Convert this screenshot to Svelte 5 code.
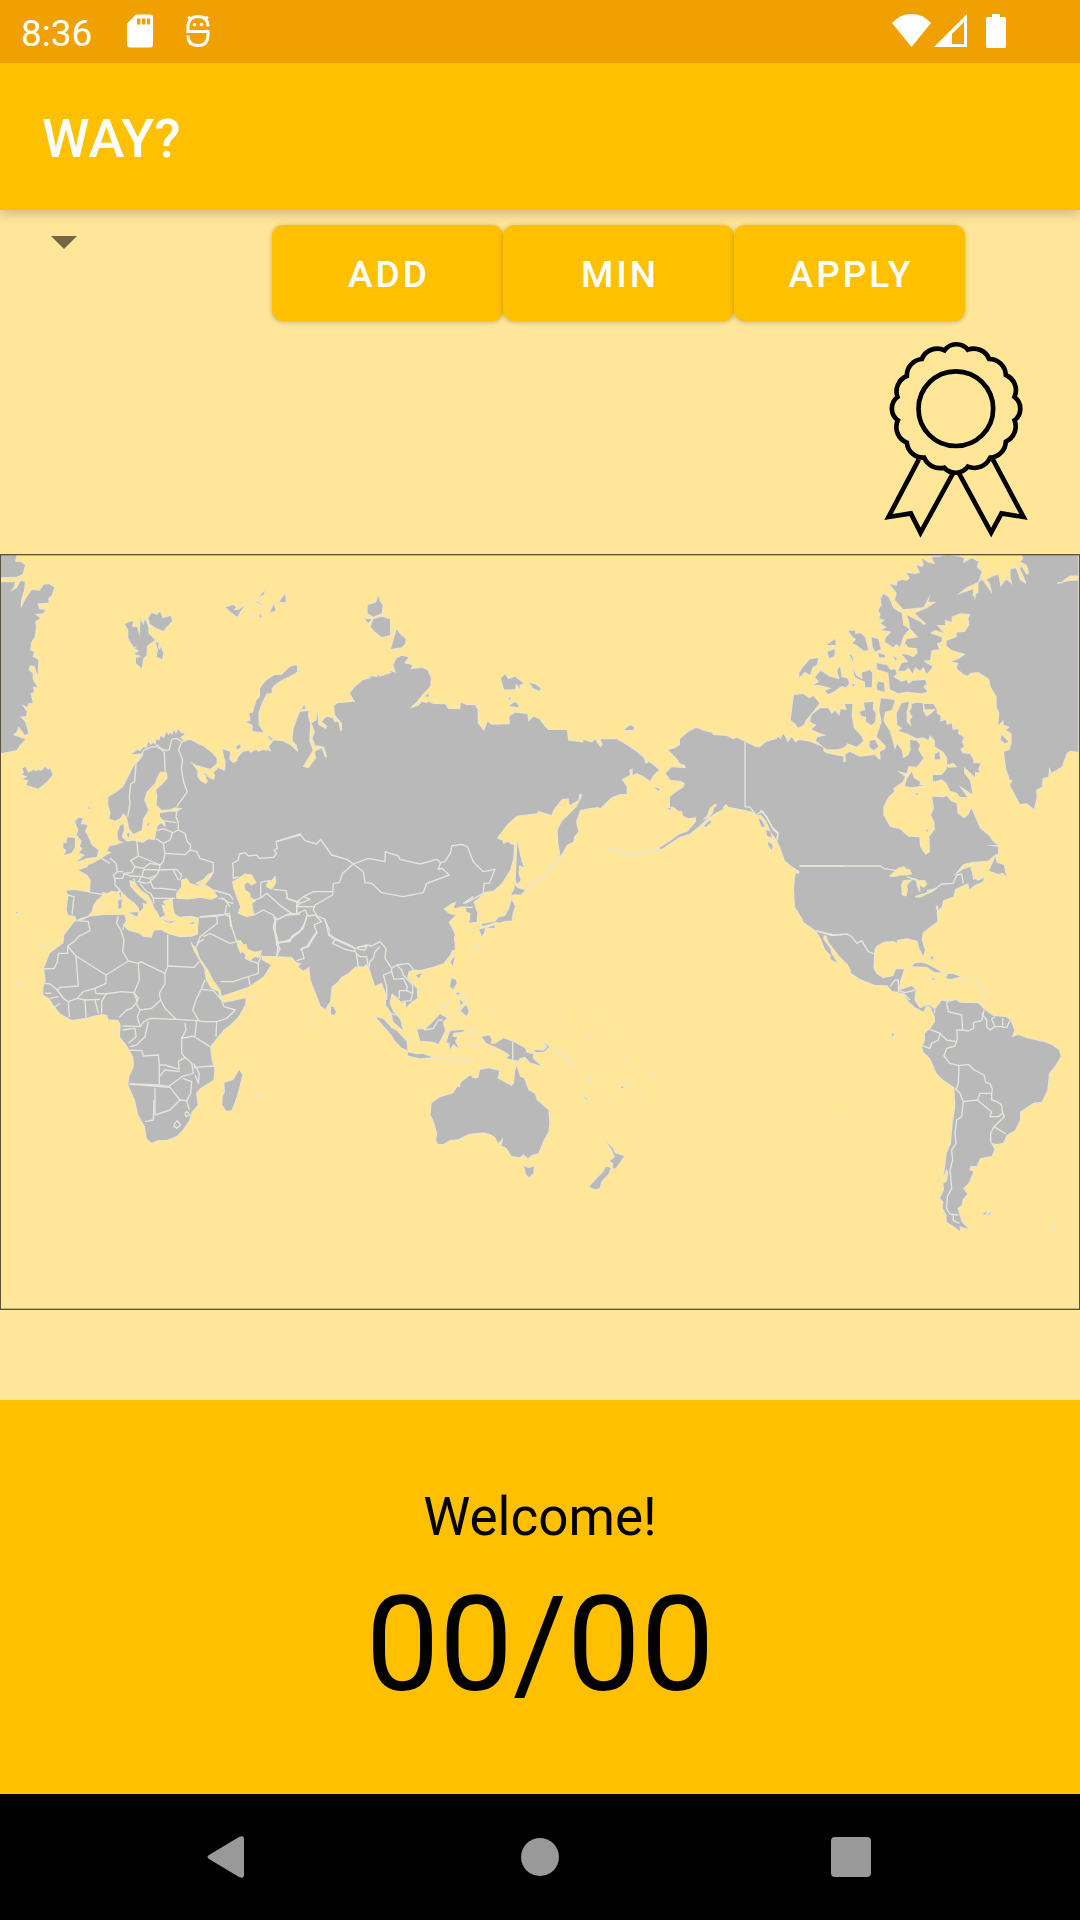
<script>
  const actions = ['ADD', 'MIN', 'APPLY'];

  // Map drawing, one tile per area. Each tile has its own origin; land outlines
  // overlap at tile edges, so halos are painted first and fills afterwards.
  const tiles = [
    {
      at: 'translate(0 0)',
      land: [
        // continental Europe and Scandinavia
        '395,613 412,600 420,604 430,592 440,594 445,575 452,585 460,578 466,584 470,568 478,572 482,558 492,564 500,545 505,556 512,548 516,556 522,540 528,552 535,538 542,548 555,552 540,562 550,572 572,570 590,580 612,590 635,608 650,625 650,640 632,656 612,652 590,645 570,635 582,648 592,662 592,680 602,694 618,702 624,692 618,684 622,675 608,668 628,684 642,690 646,676 640,668 655,655 675,662 677,635 672,620 668,598 690,605 688,628 700,640 712,632 715,620 730,605 745,602 752,608 768,600 775,605 790,600 815,605 808,590 820,572 845,573 870,585 895,608 900,600 900,1140 595,1140 600,1103 575,1098 560,1098 540,1100 525,1092 520,1070 518,1045 495,1050 488,1056 498,1068 484,1062 490,1085 495,1095 480,1103 472,1085 463,1075 458,1058 445,1035 430,1025 415,1012 405,995 388,990 390,1008 405,1025 420,1040 440,1055 440,1062 427,1058 430,1072 420,1085 415,1070 400,1055 385,1045 370,1030 360,1018 350,1025 335,1022 322,1030 308,1025 305,1038 290,1050 280,1065 275,1085 262,1098 240,1105 230,1110 225,1098 205,1095 200,1080 205,1040 200,1022 225,1020 270,1028 272,990 262,975 236,960 262,952 265,945 280,940 300,928 320,915 335,908 322,902 330,888 350,885 365,878 375,880 355,870 352,850 360,828 370,822 372,840 365,860 380,875 400,872 430,878 445,868 465,870 468,850 472,830 482,820 497,832 495,815 480,800 480,790 505,785 530,785 548,775 525,772 510,778 485,780 470,765 472,735 468,720 485,705 503,685 500,665 480,665 470,685 465,700 440,725 432,750 445,780 430,805 425,840 400,852 388,835 380,800 370,790 360,805 345,812 328,805 332,790 325,765 325,740 345,730 370,710 385,680 400,650 420,625 430,610',
        // Greenland, east coast
        '3,15 50,15 45,35 62,36 75,45 68,72 50,80 3,82',
        '3,97 45,97 40,112 30,125 50,115 62,92 75,96 72,120 63,150 62,178 75,150 95,120 120,122 130,105 145,102 163,112 155,135 145,145 145,158 112,160 118,178 135,180 130,190 105,192 120,205 105,215 108,230 104,260 94,275 90,300 102,306 98,320 115,330 112,375 104,348 90,346 85,360 98,370 98,388 112,412 98,410 102,425 92,430 98,458 85,460 82,470 65,463 80,485 78,498 60,500 75,515 85,550 75,555 55,528 50,545 38,555 76,568 60,585 50,600 3,610',
        // Iceland
        '65,672 72,668 68,655 76,650 85,668 100,660 108,664 115,660 125,662 135,650 145,660 150,655 158,675 140,695 115,716 80,705 85,690 68,688 82,680',
        // Svalbard
        '375,222 390,215 400,215 395,230 412,232 418,262 422,210 430,225 435,208 445,232 445,250 465,270 448,282 440,290 440,315 430,325 425,355 408,340 408,325 425,318 403,312 418,302 403,295 412,290 400,290 385,265 385,240',
        '445,205 455,188 470,195 480,185 488,205 512,198 517,212 500,230 490,243 470,235 450,222', '468,276 476,278 474,292 480,300 482,290 490,310 486,327 470,320 474,300',
        // Franz Josef Land
        '677,172 700,165 708,172 700,180 715,180 733,168 720,185 712,200 695,188', '838,155 855,132 857,157', '810,187 822,162 826,182', '765,152 790,166 772,158', '778,137 795,123 790,135', '748,196 760,196', '780,190 785,202 779,202',
        // Novaya Zemlya
        '738,515 752,512 748,490 758,488 770,450 780,440 780,415 800,390 825,375 845,375 870,350 890,346 892,365 870,378 845,390 830,400 815,415 815,430 800,430 785,460 775,490 776,525 790,547 758,543 758,525',
        // British Isles
        '225,815 235,803 248,805 242,822 262,825 255,845 262,855 275,885 295,900 290,920 260,925 230,935 255,915 238,908 248,895 240,890 245,872 230,855 235,840', '190,880 200,878 202,862 225,864 225,890 215,908 192,915 200,900 190,895',
        // small islands
        '708,590 720,583 722,592 712,598', '802,555 818,568 812,570', '380,852 388,848 386,864', '354,1052 365,1048 364,1074 356,1076', '357,1030 363,1026 363,1044', '388,1088 414,1086 412,1100', '488,1106 500,1116 526,1112 510,1119', '569,1120 585,1115 578,1122', '442,822 447,818 444,830', '265,770 270,775 266,777', '218,812 224,820', '48,1086 54,1088 50,1090', '304,1068 312,1064', '290,1074 294,1072', '401,1107 404,1110'
      ],
      sea: [
        '545,990 560,985 570,1000 595,1008 615,1004 640,1020 652,1040 635,1048 600,1042 565,1047 530,1045 530,1030 545,1010', '588,1000 608,990 625,972 640,968 630,985 615,1003 600,1004',
        '715,985 735,972 755,975 768,998 755,1005 742,996 732,1004 735,1020 750,1030 750,1042 768,1052 755,1060 762,1095 740,1100 715,1090 722,1070 710,1040 700,1010 698,995', '800,1010 803,992 815,992 826,978 826,1000 815,1018'
      ],
      borders: [
        '465,592 455,590 430,602 425,620 408,640 404,695 392,702 388,740 390,760 383,800', '465,592 472,585 493,608 495,664', '472,592 500,602 508,598 515,568 530,565 545,575 536,600 548,630 544,655 552,700 562,725 548,745 530,770', '545,575 560,572', '530,785 528,800 535,818 535,840 555,850 562,875 572,885 570,900 590,905 600,925 640,938 640,965 620,985',
        '490,812 530,818', '470,842 490,836 518,848 535,840', '518,848 510,870 490,880 468,866', '490,880 495,910 555,914 570,900', '495,910 490,935 480,945 478,960 530,958 545,975 540,990', '410,870 415,918 445,930 480,945', '415,918 392,932 405,950 430,955 450,940 480,945', '330,925 348,940 352,965', '305,925 330,940', '352,965 340,975 345,985 368,985 372,970 395,968 405,950', '352,965 370,965', '345,985 345,1005 360,1020', '372,970 390,978 425,980 432,958 478,960 470,975 445,985 425,980', '400,985 405,995', '425,980 415,995 440,1000 452,995 452,985', '420,1000 440,1025 452,1030', '452,995 460,1015 485,1015 530,1020', '452,1030 460,1045 462,1060', '460,1045 525,1045', '470,975 455,990', '520,960 535,990', '202,1035 222,1040 216,1094', '268,1027 308,1033', '640,1020 690,1035 700,1050', '655,1045 675,1048 690,1070', '665,1042 680,1055 700,1060', '600,1100 675,1093 680,1065', '675,1093 690,1100 692,1130', '700,960 700,985 716,980', '700,960 698,940 715,930 718,912 735,908 745,918 770,915 778,925 820,922 830,910 822,900 832,895 828,875 900,855', '782,1045 782,997 800,993', '765,1050 785,1042 800,1030 845,1070 875,1090 890,1092 890,1060 900,1050', '820,1018 858,1022 862,1045 900,1060', '762,1095 790,1080 820,1095 825,1110 860,1095 900,1092'
      ]
    },
    {
      at: 'translate(600 0)',
      land: [
        // Siberia, Mongolia and northern China
        '200,600 215,605 208,590 220,572 245,573 270,585 295,608 290,585 278,572 280,540 290,510 300,485 325,483 324,500 330,520 328,575 338,600 322,628 308,650 325,655 348,625 345,605 365,595 375,622 382,622 372,590 345,585 338,565 345,545 335,520 350,510 352,486 355,525 378,537 382,528 365,515 380,500 398,505 403,517 415,515 420,542 426,542 426,520 405,495 402,468 412,460 465,455 450,430 465,410 490,390 512,385 512,378 530,382 535,375 540,380 575,368 568,362 588,368 580,345 590,325 605,317 625,322 612,340 637,345 632,358 665,353 682,360 693,385 690,410 670,430 650,455 628,475 655,468 665,455 680,460 685,455 700,462 735,463 745,477 780,478 783,458 800,465 825,466 833,480 833,520 852,543 863,515 875,525 930,522 928,500 945,488 982,492 985,515 1000,500 1018,508 1035,530 1045,540 1100,540 1105,572 1160,578 1175,578 1185,570 1200,590 1200,770 1165,775 1140,780 1128,815 1135,845 1122,860 1120,875 1100,885 1082,918 1075,880 1073,840 1085,815 1130,770 1140,750 1152,732 1138,733 1135,750 1110,765 1105,745 1085,748 1060,780 1055,795 1015,783 1010,790 950,797 920,825 905,845 890,865 908,872 910,882 925,875 932,883 942,885 940,925 930,960 905,1000 880,1022 855,1025 835,1045 820,1055 832,1090 830,1115 808,1118 812,1090 800,1085 795,1068 778,1070 765,1075 762,1070 770,1055 755,1060 730,1077 745,1090 765,1098 745,1115 760,1145 765,1200 200,1200',
        // Japan and Sakhalin
        '945,1005 952,1014 975,1020 962,1035 948,1032 933,1035 942,1020', '935,1050 945,1068 938,1090 935,1112 915,1112 900,1118 890,1115 870,1122 848,1128 845,1122 885,1115 895,1103 915,1098 928,1075', '838,1138 855,1135 852,1148 845,1158', '863,1133 885,1126 882,1134', '952,875 958,905 965,935 972,952 958,945 955,970 962,990 952,1002 947,990 950,930',
        // northern islands
        '503,165 528,158 535,138 540,155 548,165 545,190 520,200 503,190', '520,208 545,200 570,208 570,255 545,262 525,245 512,230', '495,207 515,208 505,218', '590,238 600,252 617,268 615,282 605,292 573,297', '903,385 915,373 925,388 945,380 970,400 958,405 960,416 948,400 945,418 912,418', '988,398 1005,403 1022,415 1018,423 1000,415', '928,468 940,458 950,458 957,472', '925,444 932,442 930,450', '305,477 312,466 317,476', '676,436 688,433 683,442', '1182,568 1190,572 1183,577', '832,1188 835,1190'
      ],
      sea: [],
      borders: [
        '228,875 300,852 315,872 350,882 362,868 395,915 440,928 460,942 428,970 418,998 400,1000 398,1035 345,1065 340,1080 352,1098 375,1108 385,1150', '460,942 505,925 555,935 556,905 595,918 600,928 660,942 710,928 722,938 735,935 752,908 755,888 785,883 802,890 820,935 850,965 885,958 868,1000 852,1000 850,1030 795,1060', '460,942 490,965 495,998 515,1000 545,1028 610,1040 670,1028 680,1000 748,975 725,955 715,958 722,938', '258,1020 262,1045 290,1055 310,1040 330,1048 300,1060 290,1070 290,1090', '310,1040 340,1025 398,1025', '290,1070 345,1070', '232,1110 265,1092 290,1092 315,1080 325,1098 345,1095', '320,1100 310,1135 275,1160 270,1172 230,1178', '225,1110 220,1130 232,1180 240,1200', '345,1095 365,1115 342,1125 350,1145 320,1190 300,1200', '385,1150 405,1165 460,1190'
      ]
    },
    {
      at: 'translate(1350 300)',
      land: [
        // Chukotka
        '400,270 430,278 435,285 450,293 458,285 452,268 500,268 530,285 552,300 580,322 588,343 595,335 610,345 627,360 610,375 600,393 580,378 560,370 548,375 548,355 538,360 540,375 515,388 530,410 530,432 510,432 485,442 450,475 440,468 390,480 400,400',
        // Alaska and western Canada
        '740,233 760,242 785,248 790,255 830,258 850,268 860,263 885,275 915,290 935,293 940,282 985,265 990,270 1000,255 1012,278 1025,262 1035,278 1048,272 1100,290 1130,310 1180,320 1180,840 1100,840 1070,820 1050,795 1035,770 1033,720 1035,685 1050,665 1030,650 1005,625 1000,600 985,580 975,560 960,540 950,510 935,495 920,495 905,485 885,480 835,470 828,462 820,470 818,478 795,490 770,508 745,530 718,552 690,560 660,580 635,597 628,594 660,574 690,552 712,545 738,515 738,502 715,505 700,497 695,482 685,482 670,470 660,470 660,440 680,425 700,412 705,400 690,392 662,390 647,370 665,352 708,355 705,345 690,340 680,325 655,300 675,295 690,285 690,268 715,245',
        '523,240 540,226 552,232 550,240', '612,412 630,418 625,422', '652,475 662,473 660,480', '762,528 780,510 782,518 768,530', '1005,628 1048,648 1045,660 1020,645', '955,575 968,585 965,600 955,585', '925,505 935,510 945,530 935,530', '948,540 962,545 965,562 952,558'
      ],
      sea: [
        '760,508 772,498 780,475 795,462 800,465 790,475 788,488 775,503'
      ],
      borders: ['885,275 885,470 900,472 918,495 935,485 950,500 965,530 984,548 980,575', '1050,648 1180,648', '1100,843 1150,855 1180,853'],
      chain: ['470,595 500,605 555,612 595,606 630,597', '232,712 270,688 295,665 328,620']
    },
    {
      at: 'translate(2280 0)',
      land: [
        // mainland Canada and the United States
        '0,592 20,575 50,568 55,560 62,568 70,552 78,565 82,578 98,565 105,578 118,570 150,575 190,592 190,605 185,620 245,618 250,636 258,636 256,615 268,605 300,620 345,615 355,628 362,628 360,605 375,598 378,588 350,560 365,515 358,480 363,445 405,450 395,480 375,485 370,512 390,545 405,600 412,582 425,600 430,625 445,615 452,600 450,570 470,572 480,585 475,600 490,625 470,650 445,648 440,670 410,662 435,680 428,695 400,715 402,725 385,740 370,770 370,795 390,830 420,838 445,860 478,862 480,890 497,915 510,905 508,860 525,838 523,815 513,795 522,775 516,740 550,742 560,738 575,755 590,760 592,790 612,805 625,795 634,775 645,800 650,812 660,835 690,860 695,870 712,885 676,885 714,890 714,910 700,918 685,932 640,935 610,942 580,978 610,958 632,950 640,985 655,992 672,983 668,995 645,1005 628,1018 625,1000 600,1010 585,1018 580,1040 550,1050 545,1070 530,1085 532,1115 510,1130 488,1148 485,1170 495,1200 490,1217 478,1195 472,1172 440,1165 410,1170 412,1178 400,1173 370,1175 350,1185 343,1200 340,1260 272,1260 265,1245 240,1220 205,1175 200,1158 190,1155 190,1168 210,1195 215,1212 232,1238 212,1228 212,1215 195,1198 185,1170 168,1142 130,1115 120,1085 105,1060 103,1010 107,970 122,975 118,958 75,932 60,890 50,870 30,840 20,815 0,790',
        // Greenland
        '785,15 790,25 782,35 800,45 808,68 800,75 785,50 780,55 798,95 798,102 780,90 768,55 752,58 752,85 758,105 742,90 735,92 722,112 715,75 700,78 680,90 690,100 697,132 685,115 665,88 655,100 655,130 648,132 645,150 640,135 600,190 632,192 625,205 628,225 615,245 590,248 590,262 560,272 560,288 575,300 617,312 600,325 575,335 595,338 590,355 610,372 622,377 632,368 655,366 688,388 692,410 710,440 710,470 718,490 715,525 730,510 732,525 750,530 738,540 755,550 755,580 748,600 732,605 738,655 750,690 758,690 750,705 780,762 800,760 822,777 830,740 828,720 845,710 848,685 865,680 868,650 875,668 905,650 920,610 930,602 955,605 955,15',
        // Ellesmere, Axel Heiberg and Devon
        '390,102 410,108 412,95 425,90 440,92 450,85 440,68 465,72 480,68 470,45 485,52 492,45 485,25 505,38 525,42 515,22 540,20 560,15 600,20 612,25 610,40 635,25 655,35 650,50 665,65 655,95 620,112 590,135 640,118 635,150 600,190 575,200 575,215 555,210 555,225 530,225 550,248 525,240 510,250 545,262 545,275 530,280 538,298 515,300 510,330 490,333 518,350 500,372 490,350 480,362 465,350 458,370 445,352 435,362 415,362 425,340 445,335 425,312 445,315 460,322 473,308 470,295 445,292 435,280 440,268 475,262 450,235 448,215 440,195 480,215 490,225 500,222 480,205 465,190 500,175 530,155 505,155 512,132 490,172 430,178 405,150 410,130',
        '370,132 385,140 400,175 425,190 430,225 448,238 430,258 420,290 408,282 400,292 375,275 378,262 395,245 365,240 380,232 362,220 375,210 358,205 362,192 355,182 365,165 362,148',
        '350,340 380,345 392,360 405,358 410,372 400,380 425,395 440,390 445,402 458,392 495,390 500,402 490,410 502,425 485,430 440,425 415,430 390,418 385,368 352,358',
        // western Arctic islands
        '265,242 285,242 285,252 302,250 315,262 325,300 312,302 290,285 278,280 288,268 278,260', '335,262 355,268 362,298 345,305 338,290', '355,395 372,398 374,425 352,420 350,408', '200,285 225,268 228,284', '202,305 225,298 222,318 208,325', '118,368 130,350 150,328 175,325 170,345 158,350 150,375 135,365 118,382', '165,382 182,362 210,380 238,388 232,360 240,350 245,382 262,385 268,400 258,412 245,408 220,425 205,432 195,422 215,415 180,405 162,405 178,395', '280,360 290,378 308,388 305,368 330,360 337,370 335,412 315,412 315,395 285,382', '355,310 375,315 375,322 358,322', '268,313 278,320 280,335', '400,318 410,325 408,332', '276,408 284,408 280,400', '300,302 303,308', '186,347 196,349', '190,298 188,305',
        '102,435 130,432 148,445 160,438 178,460 155,490 138,510 130,525 115,533 105,520 92,510 98,465', '180,475 205,475 215,492 225,482 238,497 242,478 260,480 255,462 277,462 275,500 282,535 305,560 310,572 290,590 262,580 255,590 235,598 200,598 168,572 172,562 200,556 180,550 155,538 170,525 150,515 155,495', '298,485 316,480 312,458 340,455 338,478 347,490 345,515 335,525 318,515 318,500 305,498', '330,572 345,570 355,590 340,600 328,590',
        // Baffin Island
        '425,460 448,455 440,485 440,515 455,530 450,510 458,500 448,485 455,475 455,462 470,458 488,460 490,485 500,500 515,490 528,478 495,478 492,462 520,462 530,478 530,490 542,498 540,515 558,510 560,525 575,520 578,540 595,538 595,552 612,562 605,575 612,590 600,597 608,610 630,612 640,630 640,640 662,640 655,655 658,668 645,665 645,682 612,650 612,668 630,692 637,732 610,715 595,705 622,742 600,740 590,728 570,722 560,700 545,688 520,695 518,675 545,675 560,658 562,625 550,605 525,590 525,572 510,555 505,570 490,562 470,565 440,550 415,542 428,535 412,525 410,490',
        '440,690 455,665 462,685 480,695 478,705 492,706 455,712 435,708', '525,612 538,606 540,628 524,628', '465,728 475,732 470,735', '497,738 502,742', '498,842 504,838 502,846',
        '705,920 710,938 732,945 735,965 740,978 728,968 715,972 688,962 695,945 700,935', '640,938 658,948', '512,1222 520,1218 515,1228', '725,555 745,575 735,580 722,570'
      ],
      sea: [
        '892,100 905,98 915,88 930,78 955,78 955,90 925,92', '388,978 415,955 432,950 440,958 450,960 455,972 440,975 420,975 405,980', '430,992 452,990 460,985 440,1005 442,1020 438,1038 427,1035 425,1005', '462,985 478,992 495,992 500,1005 490,1012 478,1003 480,1025 472,1010 470,995', '466,1040 478,1035 498,1030 510,1020 530,1015 518,1025 500,1032 480,1042', '528,1070 533,1068 535,1090', '632,955 660,960 672,970 662,985 650,980 640,990 640,970', '580,640 590,650 565,652 560,645'
      ],
      borders: ['0,783 8,783 30,820 40,840 54,850 52,870', '118,948 362,948 370,955 410,962', '440,980 470,990', '500,1022 520,1020 545,1002 580,1000 590,975 605,972 610,1000', '168,1142 215,1157 262,1152 275,1160 290,1180 305,1172 325,1205 343,1212']
    },
    {
      at: 'translate(0 690)',
      land: [
        // Africa
        '230,420 242,422 268,410 310,405 355,405 372,404 378,422 368,435 385,452 415,460 430,470 455,473 462,452 482,450 505,462 540,472 575,470 595,462 595,440 600,400 680,400 620,470 590,500 582,498 570,480 580,510 600,545 612,565 618,600 632,625 655,635 658,655 672,668 712,660 737,655 735,675 715,710 690,735 670,750 650,775 630,800 635,840 643,870 640,900 600,925 588,940 593,975 575,995 568,1020 548,1050 530,1068 500,1080 475,1080 455,1088 440,1075 435,1040 415,1005 405,960 385,915 388,890 402,860 400,830 380,795 360,770 362,735 355,720 325,718 322,705 305,702 250,715 215,720 180,700 160,675 148,655 130,645 130,625 137,600 132,565 150,520 190,490 193,465 220,430',
        // Middle East
        '598,400 595,440 595,470 583,485 590,505 600,535 625,570 640,600 662,630 665,648 745,620 790,590 812,555 785,540 785,515 825,528 885,530 900,550 900,400',
        // Madagascar and islands
        '718,870 727,885 718,920 710,950 695,990 680,993 667,975 668,950 675,935 673,908 700,900', '118,493 124,496', '130,498 134,502', '153,497 158,490', '126,453 131,456', '52,606 62,608', '66,625 70,626', '335,756 339,758', '773,798 777,801', '663,864 667,866', '770,950 778,952', '789,943 794,944', '757,649 763,650'
      ],
      sea: ['712,482 722,482 730,495 738,492 742,508 765,517 785,512 778,532 762,530 750,542 735,535 738,525 728,515 722,520 712,495'],
      borders: [
        '228,422 265,425 270,452 235,470 222,485 203,498 203,520 175,520 172,545 163,565 132,567', '203,498 228,528 235,618 180,622 172,630 150,612 135,610', '228,528 318,585 385,543 368,515 372,480 362,450 350,430 355,408', '385,543 415,550 422,545 495,580 503,560 503,465', '503,558 582,562 598,545', '370,440 370,450', '318,585 318,610 285,625 250,635 232,655 205,665 190,655 172,630', '285,625 288,640 315,642 365,635 402,638 418,600 415,550', '318,642 305,665 305,700', '285,660 295,700', '255,660 258,712', '232,655 255,660 300,658', '205,665 208,712', '180,670 160,685', '150,655 175,650', '135,640 155,640', '402,638 412,665 395,685 380,690 358,712', '402,638 415,655 408,670 420,690 455,685 482,660 478,640 495,610 495,580', '420,690 412,710 420,740 368,738', '482,660 495,685 528,718 450,715 432,725 420,740', '528,718 590,722 595,720 578,690 590,655 605,625 615,600', '605,628 640,632 665,660 672,680 706,690 680,715 650,725 615,725 590,722', '650,725 648,770', '555,728 558,750 545,775 580,768 630,800', '590,722 585,768', '545,775 545,820 555,832 535,845 538,868 495,855 478,855 475,825 430,828 425,812 388,810', '445,725 435,770 410,795 390,800', '368,750 405,745 408,770 385,790', '478,855 478,915 388,912', '478,915 505,920 545,890 580,880 575,850 555,832', '580,850 598,880 595,910 585,885', '580,862 640,858', '388,912 510,922 540,960 510,990 465,1005 465,925', '462,960 460,1020 435,1025', '548,895 575,905 572,940 560,962 540,960', '560,962 568,990', '525,1030 532,1022 542,1035 530,1045 522,1038 525,1030', '555,1000 562,995 570,1005 558,1010 555,1000', '478,890 495,870 540,875', '598,412 650,408 652,430 600,470 590,500', '652,408 688,400 695,440 710,485 690,490 630,460 610,470', '612,478 590,490', '662,605 700,605 745,590 775,580 775,550 750,542', '745,590 750,615', '775,550 785,525', '825,410 825,450 835,490 830,528', '835,490 870,478 900,455'
      ]
    },
    {
      at: 'translate(660 810)',
      land: [
        // South and East Asia
        '100,250 100,400 130,408 170,408 215,410 228,425 245,430 235,440 250,452 268,440 272,480 290,525 302,558 315,567 330,545 335,500 350,488 365,470 385,460 405,440 415,438 430,440 440,432 450,450 465,497 485,488 498,520 498,555 515,580 520,605 548,630 540,598 520,575 508,550 515,520 532,532 545,548 558,545 558,562 575,545 592,535 590,505 562,475 565,455 580,448 600,450 640,440 670,430 690,405 705,370 697,358 705,345 695,325 685,310 692,295 708,285 690,286 680,282 620,240',
        '333,560 340,560 348,575 342,586 333,582', '588,466 605,460 597,475', '692,425 703,410 698,438',
        // Indonesia and the Philippines
        '468,592 490,597 515,625 530,632 560,665 562,690 545,683 525,662 515,645 500,628', '563,697 590,703 610,702 635,712 600,715 565,707', '592,628 615,628 635,610 660,582 680,595 668,605 675,632 655,672 640,665 600,662', '685,648 692,632 735,630 728,635 700,638 698,650 712,652 705,662 715,685 700,672 690,688 688,668 680,668', '695,475 708,480 710,490 700,508 690,500', '722,572 738,555 746,572 740,588', '708,518 722,520 712,524', '720,540 730,548 722,555', '665,565 688,543', '700,590 706,585', '712,578 720,565', '645,714 680,716', '690,718 720,715', '725,730 750,716', '755,625 762,645', '745,671 785,672', '558,658 570,662', '815,692 820,698', '780,742 800,745', '733,530 738,545',
        '785,650 808,646 815,660 812,670 825,672 850,655 880,665 915,685 920,698 940,702 938,715 962,737 930,727 915,710 898,715 895,722 860,715 870,705 850,692 825,680 798,668', '940,690 970,692 983,680 972,668 988,680 972,695 950,697',
        // Australia and New Zealand
        '635,850 660,832 700,820 712,800 720,802 722,788 750,766 760,775 775,775 780,750 805,745 838,752 832,775 875,798 882,790 885,755 890,738 900,770 912,775 925,810 945,822 950,840 985,870 988,910 985,935 970,962 955,1000 935,1005 925,1015 910,1003 900,1012 875,1008 862,988 855,980 845,978 850,952 835,970 825,950 810,942 790,937 745,942 715,958 690,960 670,972 655,972 648,960 652,940 640,900 632,885', '912,1038 925,1044 942,1040 940,1060 927,1072 918,1062', '1160,967 1178,985 1185,1000 1212,1008 1198,1030 1185,1046 1178,1042 1180,1030 1170,1022 1185,1012 1175,988', '1158,1040 1172,1043 1165,1062 1145,1082 1138,1105 1125,1108 1108,1100 1135,1070 1150,1055',
        // Pacific and Indian Ocean islands
        '1087,824 1104,840 1098,838', '1203,800 1213,800 1205,805', '1216,791 1224,788', '1290,762 1300,765', '1105,775 1114,790', '1122,800 1124,803', '1000,690 1025,703', '1035,710 1062,737', '816,574 820,576', '1026,580 1029,582', '1146,578 1149,580', '1162,629 1165,631', '1107,647 1111,649', '1215,717 1219,719', '1266,833 1269,835', '270,584 272,586', '272,600 275,602', '272,616 275,618', '270,632 273,635', '760,395 775,378', '748,325 752,327'
      ],
      sea: [],
      borders: [
        '168,290 165,330 170,375 180,385 170,408', '170,368 210,365 215,350 240,335 258,300 262,280', '292,335 265,380 245,385 252,415 230,422', '315,300 328,330 325,345 345,358 405,385 440,375 455,378 480,365 498,385 495,415 515,445 530,435 565,430 580,448', '345,358 338,370 375,388 405,395 405,385', '415,380 440,380 435,390 415,388 415,380', '408,395 415,440', '408,400 420,410 440,410 445,440', '480,380 465,395 460,415 450,425 445,455', '515,445 515,455 490,465 500,500 500,540', '515,455 522,478 550,475 562,500 560,512 538,512 538,535', '530,435 545,450 550,465 578,495 578,520 560,512', '578,520 572,542 545,545', '612,630 640,625 655,600 668,600', '878,665 878,722', '512,580 528,585', '730,250 760,230', '735,262 758,262'
      ]
    },
    {
      at: 'translate(2280 750)',
      land: [
        // Mexico, Central and South America
        '250,380 190,395 205,408 230,450 265,490 275,505 272,518 300,537 345,555 382,556 395,572 430,580 445,603 465,622 490,635 498,620 510,622 517,635 525,650 525,665 512,685 495,700 495,720 487,742 490,755 510,775 530,820 550,840 583,862 586,920 578,970 573,1030 560,1060 555,1105 550,1130 560,1105 565,1120 560,1145 550,1150 552,1170 540,1195 550,1205 548,1225 560,1245 560,1265 575,1275 600,1292 598,1278 625,1287 605,1265 592,1225 605,1215 608,1198 622,1182 610,1165 625,1150 640,1115 628,1110 632,1098 650,1098 660,1075 695,1068 703,1048 692,1028 710,1032 730,1028 740,1005 765,990 780,960 780,935 800,922 820,908 845,905 862,870 867,820 885,798 902,770 897,750 875,735 855,727 800,715 775,705 755,712 763,690 752,662 740,652 700,648 672,628 655,610 600,608 588,600 568,605 545,602 525,628 505,615 480,625 463,600 467,570 455,558 415,572 420,545 432,508 408,508 400,528 370,535 350,522 338,500 338,460 345,440 372,425 300,380',
        '456,499 465,490 485,488 500,492 545,517 525,517 500,500', '558,533 565,522 580,522 600,530 570,538', '515,535 527,537 520,540', '612,533 625,536', '652,545 660,548', '662,557 667,575', '680,581 682,584', '660,592 662,604', '512,472 520,470 516,480', '394,700 402,703 398,710', '232,950 237,952', '668,1242 680,1236 676,1244', '682,1244 694,1235 688,1244', '874,1274 888,1286', '553,508 559,511', '640,1115 636,1120', '592,1260 598,1270 594,1290'
      ],
      sea: ['496,622 506,618 515,628 506,618'],
      borders: [
        '390,560 405,540 415,540 415,575', '415,572 435,578 465,570', '432,582 450,600', '525,628 522,640', '572,590 560,610 565,635 605,645 608,690 590,690 592,715 585,738 560,745 552,768 570,790 597,797 625,793 640,808 672,825 678,848 690,850 697,868 695,880 660,880 652,900 610,905 600,880 585,865', '510,688 540,700 560,720 588,725', '540,702 535,720 515,730 510,745 490,738', '597,797 595,850 588,870', '608,690 625,693 642,685 640,668 665,662 672,630', '665,640 680,660 680,680 690,690 705,680 695,658 705,650', '705,680 728,680 728,655', '728,682 740,682 750,662', '652,900 695,935 690,950 715,950 728,940 725,915 712,905 695,900 695,880', '728,940 733,950 702,980 738,1002', '702,980 692,1000 692,1028', '610,905 605,950 590,960 585,1000 588,1030 575,1050 578,1080 570,1110 575,1165 562,1190 560,1225 570,1242 595,1245', '580,1245 580,1262 598,1270'
      ]
    }
  ];
</script>

<svelte:head><title>WAY?</title></svelte:head>

<div class="screen">
  <div class="status">
    <span class="clock">8:36</span>
    <svg class="sd" viewBox="0 0 26 33" aria-hidden="true">
      <path fill-rule="evenodd" d="M9 0H23Q26 0 26 3V30Q26 33 23 33H3Q0 33 0 30V9ZM10 4V10H13.500V4ZM15 4V10H18.500V4ZM20 4V10H23V4Z" />
    </svg>
    <svg class="face" viewBox="0 0 24 33" aria-hidden="true">
      <path d="M22 12C22 5 18 2 12 2S2 6 2 12V17H22V20C22 28 18 31 12 31S2 28 2 21M4.500 5 2.500 2M19.500 5 21.500 2" />
      <circle cx="8.500" cy="10" r="1.800" /><circle cx="15.500" cy="10" r="1.800" />
    </svg>
    <div class="signals">
      <svg class="wifi" viewBox="0 0 39 33" aria-hidden="true"><path d="M0 9Q8 0 19.500 0T39 9L19.500 33Z" /></svg>
      <svg class="cell" viewBox="0 0 33 33" aria-hidden="true"><path fill-rule="evenodd" d="M33 0V33H0ZM30 8 18 20V30H30Z" /></svg>
      <svg class="battery" viewBox="0 0 20 34" aria-hidden="true"><path d="M6 0H14V3H18Q20 3 20 5V32Q20 34 18 34H2Q0 34 0 32V5Q0 3 2 3H6Z" /></svg>
    </div>
  </div>

  <header><h1>WAY?</h1></header>

  <main>
    <div class="tools">
      <div class="picker">
        <select aria-label="Country"></select>
        <svg viewBox="0 0 26 13" aria-hidden="true"><path d="M0 0H26L13 13Z" /></svg>
      </div>
      <div class="actions">
        {#each actions as action}
          <button type="button">{action}</button>
        {/each}
      </div>
    </div>

    <div class="badge-row">
      <svg class="badge" viewBox="60 12 455 615" role="img" aria-label="Award">
        <path d="M253 58A44 44 0 0 1 323 56A50 50 0 0 1 387 84A50 50 0 0 1 437 132A50 50 0 0 1 463 198A44 44 0 0 1 463 268A50 50 0 0 1 437 332A50 50 0 0 1 390 380A52 52 0 0 1 323 407A46 46 0 0 1 252 410A52 52 0 0 1 192 380A50 50 0 0 1 140 335A50 50 0 0 1 113 268A44 44 0 0 1 112 198A50 50 0 0 1 140 135A50 50 0 0 1 185 84A50 50 0 0 1 253 58Z" />
        <circle cx="287" cy="233" r="112" />
        <path d="M176 385 85 558 152 547 181 605 278 428M297 428 393 605 424 547 490 558 398 385" />
      </svg>
    </div>

    <svg class="map" viewBox="0 12 3240 2268" role="img" aria-label="World map">
      {#each tiles as tile}
        <g class="halo" transform={tile.at}>
          {#each tile.land as points}<polygon {points} />{/each}
        </g>
      {/each}
      {#each tiles as tile}
        <g class="land" transform={tile.at}>
          {#each tile.land as points}<polygon {points} />{/each}
        </g>
      {/each}
      {#each tiles as tile}
        <g transform={tile.at}>
          {#each tile.sea as points}<polygon class="sea" {points} />{/each}
          {#each tile.borders as points}<polyline class="border" {points} />{/each}
          {#each tile.chain ?? [] as points}<polyline class="chain" {points} />{/each}
        </g>
      {/each}
      <rect class="frame" x="1" y="14" width="3238" height="2264" />
    </svg>
  </main>

  <section class="score">
    <p class="greeting">Welcome!</p>
    <p class="count">00/00</p>
  </section>

  <nav>
    <button type="button" aria-label="Back"><svg viewBox="2 0 42 42"><path d="M4 19 34 1Q39 -1 39 3V39Q39 43 34 41L4 23Q1 21 4 19Z" /></svg></button>
    <button type="button" aria-label="Home"><svg viewBox="0 0 42 42"><circle cx="21" cy="21" r="19" /></svg></button>
    <button type="button" aria-label="Recent apps"><svg viewBox="1 0 42 42"><rect x="1" y="1" width="40" height="40" rx="4" /></svg></button>
  </nav>
</div>

<style>
  :global(body) { margin: 0; background: #000; }
  .screen { display: flex; flex-direction: column; min-height: 100vh; font-family: Roboto, "Liberation Sans", sans-serif; background: #ffe699; }
  svg { display: block; overflow: visible; }
  .status { position: relative; z-index: 1; display: flex; align-items: flex-start; box-sizing: border-box; height: 63px; padding: 14px 74px 0 21px; background: #f0a000; color: #fff; fill: #fff; }
  .clock { width: 106px; font-size: 37px; line-height: 40px; }
  .sd { width: 26px; height: 34px; }
  .face { width: 24px; height: 34px; margin-left: 33px; }
  .face path { fill: none; stroke: #fff; stroke-width: 3; }
  .signals { display: flex; margin-left: auto; }
  .wifi { width: 39px; height: 33px; }
  .cell { width: 33px; height: 33px; margin-left: 3px; }
  .battery { width: 20px; height: 34px; margin-left: 19px; }
  header { display: flex; align-items: center; box-sizing: border-box; height: 147px; padding: 4px 42px 0; background: #ffc000; color: #fff; box-shadow: 0 3px 12px rgba(0, 0, 0, 0.22); }
  h1 { margin: 0; font-size: 54px; font-weight: 500; line-height: 62px; }
  main { flex: 1; }
  .tools { display: flex; padding-top: 15px; }
  .picker { position: relative; width: 272px; height: 48px; }
  select { width: 127px; height: 48px; border: 0; background: transparent; appearance: none; }
  .picker svg { position: absolute; left: 51px; top: 11px; width: 26px; height: 13px; fill: #736845; pointer-events: none; }
  .actions { display: flex; flex: 1; }
  .actions button { box-sizing: border-box; width: 231px; height: 96px; padding: 3px 0 0 3px; border: 0; border-radius: 11px; background: #ffc000; color: #fff; font: 500 37px/44px Roboto, sans-serif; letter-spacing: 3px; box-shadow: 0 1px 5px rgba(0, 0, 0, 0.24); }
  .badge-row { display: flex; justify-content: flex-end; padding: 14px 48px 14px; }
  .badge { width: 152px; height: 205px; fill: none; stroke: #000; stroke-width: 14; stroke-miterlimit: 8; }
  .map { width: 100%; height: auto; overflow: hidden; }
  .halo { fill: #e9e5d2; stroke: #e9e5d2; stroke-width: 6; stroke-linejoin: round; }
  .land { fill: #b9b9b9; }
  .sea { fill: #ffe699; stroke: #e9e5d2; stroke-width: 3; }
  .border { fill: none; stroke: #e6e6df; stroke-width: 4; stroke-linejoin: round; }
  .chain { fill: none; stroke: #e9e5d8; stroke-width: 6; stroke-dasharray: 16 3; }
  .frame { fill: none; stroke: #5c5338; stroke-width: 4; }
  .score { box-sizing: border-box; height: 394px; padding-top: 86px; background: #ffc000; color: #000; text-align: center; }
  p { margin: 0; }
  .greeting { font-size: 53px; line-height: 62px; }
  .count { margin-top: 20px; font-size: 131px; line-height: 154px; }
  nav { display: flex; align-items: center; justify-content: space-between; height: 126px; padding: 0 187px; background: #000; }
  nav button { padding: 20px; border: 0; background: none; }
  nav svg { width: 42px; height: 42px; fill: #999; }
</style>
